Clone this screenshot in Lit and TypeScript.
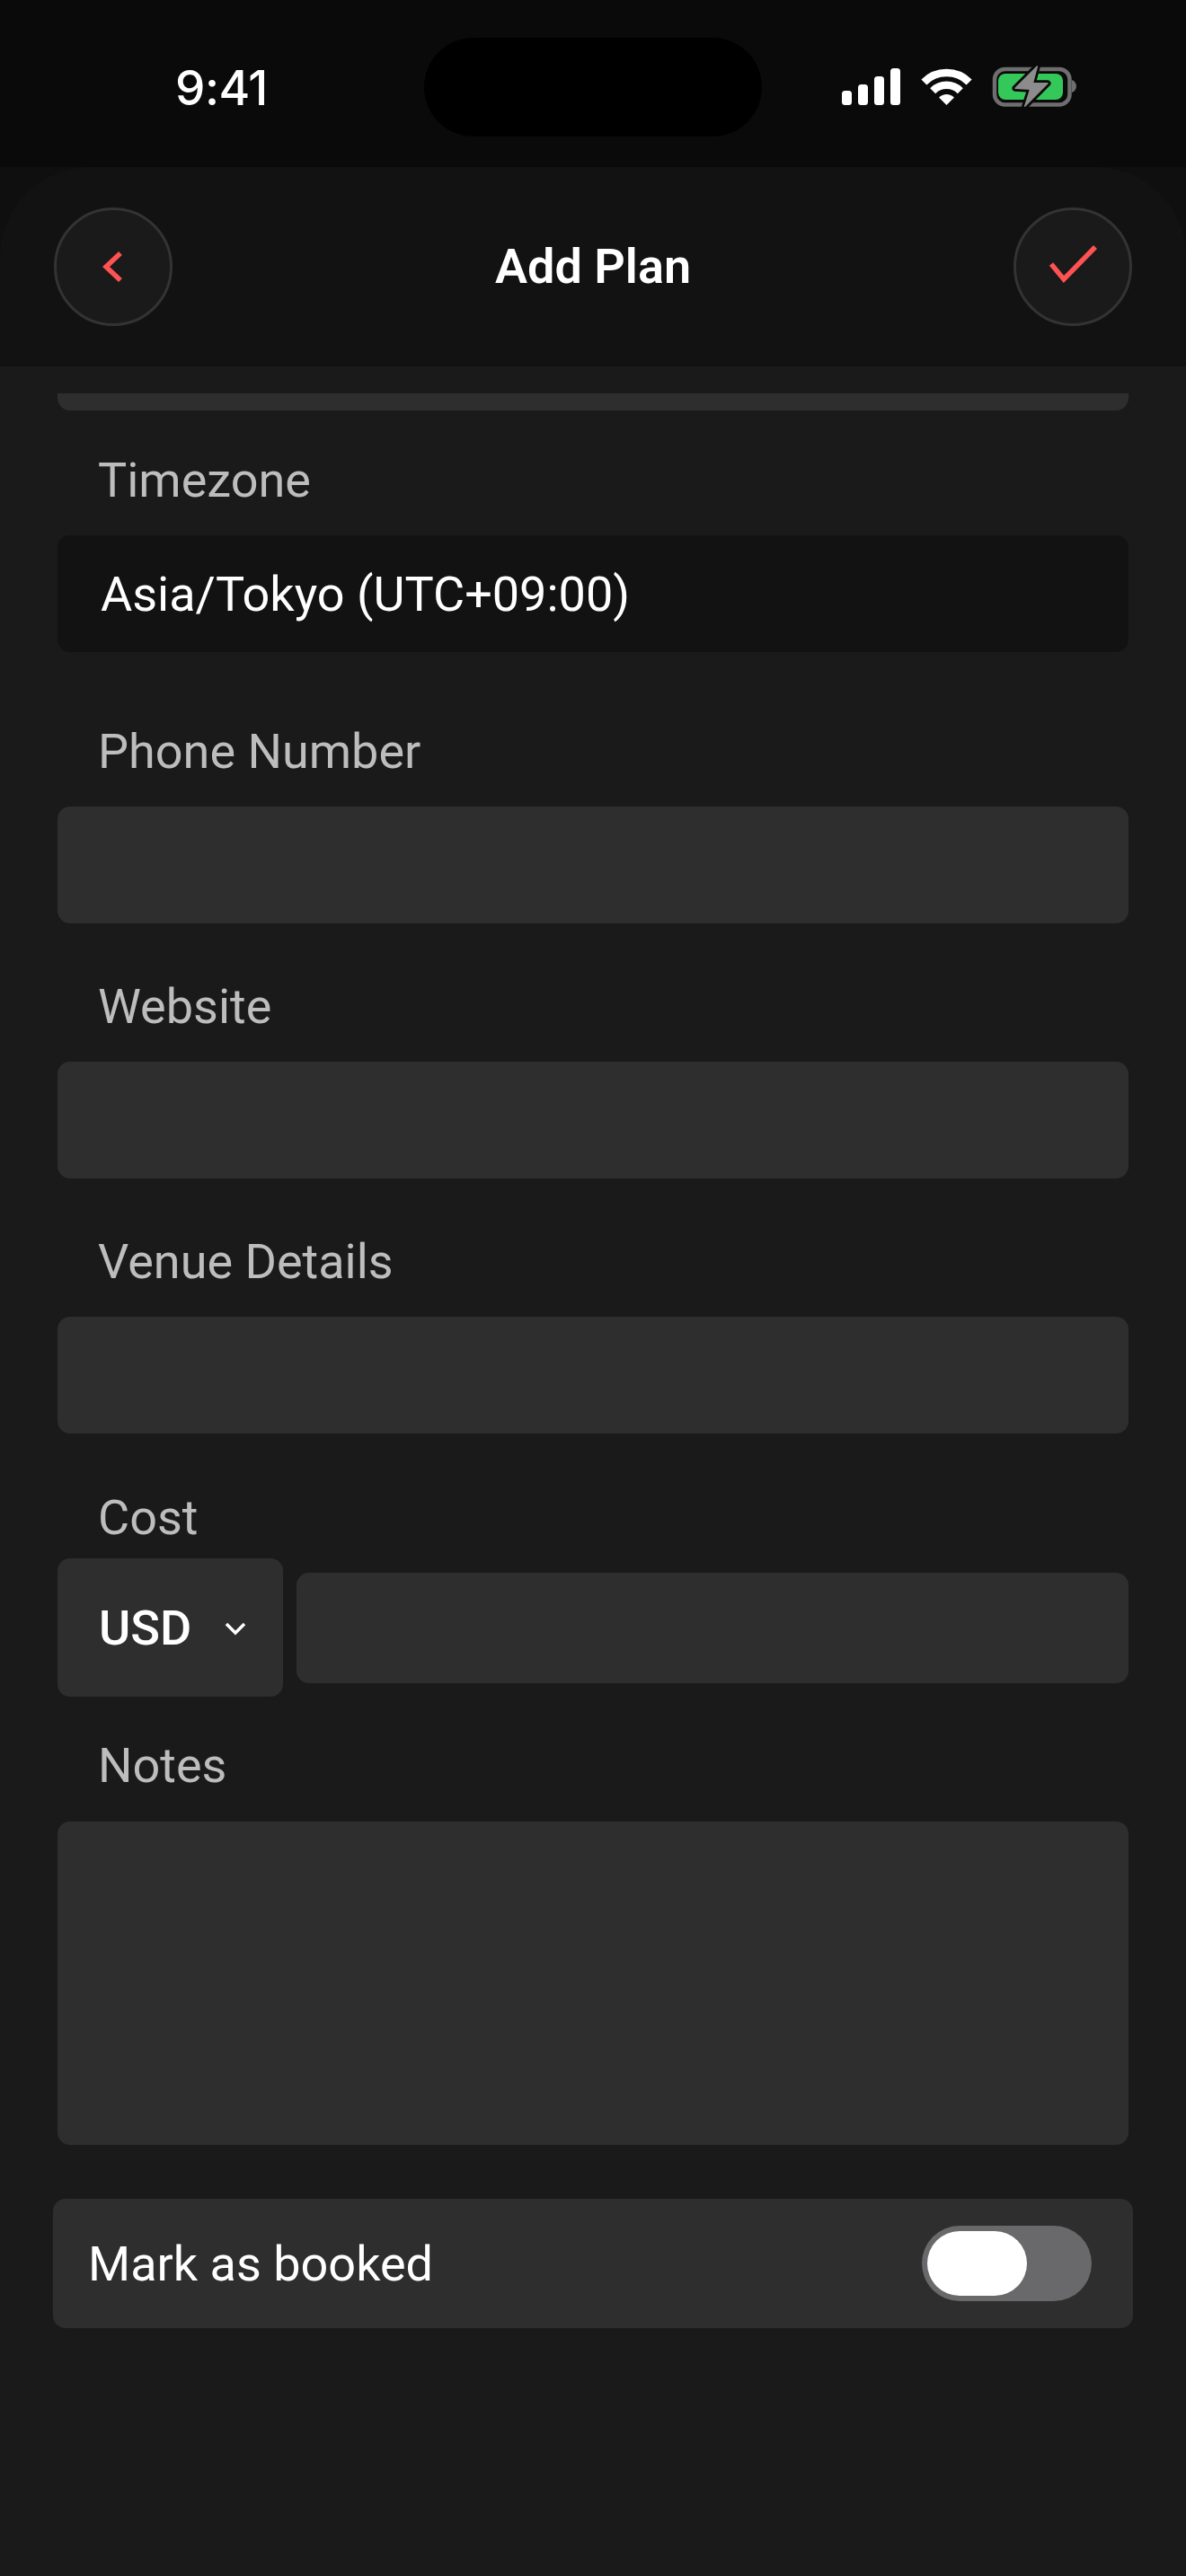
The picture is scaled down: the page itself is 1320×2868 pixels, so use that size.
import { LitElement, html, css } from "lit";
import { customElement } from "lit/decorators.js";

@customElement("app-root")
export class AppRoot extends LitElement {
  static styles = css`
    :host {
      display: block;
      width: 1320px;
      height: 2868px;
      background: #1a1a1a;
      font-family: Roboto, "Liberation Sans", sans-serif;
      color: #fff;
      overflow: hidden;
    }
    * { box-sizing: border-box; }
    .status {
      position: relative;
      height: 186px;
      background: #0a0a0a;
    }
    .time {
      position: absolute;
      left: 195px;
      top: 67px;
      font-family: Inter, Roboto, sans-serif;
      font-size: 53px;
      line-height: 62px;
      font-weight: 500;
      letter-spacing: -0.5px;
    }
    .island {
      position: absolute;
      left: 472px;
      top: 42px;
      width: 376px;
      height: 110px;
      border-radius: 55px;
      background: #000;
    }
    .icons { position: absolute; left: 0; top: 0; }
    .header {
      height: 222px;
      background: #0f0f0f;
    }
    .header-inner {
      height: 100%;
      background: #121212;
      border-radius: 100px 100px 0 0;
      display: flex;
      align-items: center;
      justify-content: space-between;
      padding: 0 60px;
      position: relative;
    }
    .circle {
      width: 132px;
      height: 132px;
      border-radius: 50%;
      background: #1a1a1a;
      border: 3px solid #333;
      display: flex;
      align-items: center;
      justify-content: center;
      padding: 0;
    }
    .title {
      font-size: 54px;
      line-height: 64px;
      font-weight: 600;
    }
    .form {
      display: flex;
      flex-direction: column;
      padding: 30px 64px 0;
    }
    .sliver {
      height: 19px;
      background: #2e2e2e;
      border-radius: 0 0 14px 14px;
      margin-bottom: 46px;
    }
    .field { display: flex; flex-direction: column; margin-bottom: 61px; }
    .field.readonly { margin-bottom: 79px; }
    .field.venue { margin-bottom: 62px; }
    .label {
      font-size: 54px;
      line-height: 63px;
      color: #bdbdbd;
      padding-left: 45px;
      margin-bottom: 30px;
    }
    .input {
      display: block;
      width: 100%;
      height: 130px;
      border: 0;
      outline: 0;
      border-radius: 14px;
      background: #2e2e2e;
      color: #fff;
      font: inherit;
      font-size: 54px;
      padding: 0 48px;
      margin: 0;
    }
    .input.dark { background: #121212; }
    .cost { margin-bottom: 45px; }
    .cost .label { margin-bottom: 14px; }
    .cost-row { display: flex; align-items: center; gap: 15px; }
    .select {
      width: 251px;
      height: 154px;
      border-radius: 14px;
      background: #2e2e2e;
      display: flex;
      align-items: center;
      padding-left: 46px;
      gap: 37px;
      font-size: 54px;
      font-weight: 500;
      flex: none;
    }
    .select svg { margin-top: 2px; flex: none; }
    .cost-row .input { flex: 1; width: auto; height: 123px; min-width: 0; }
    .notes { margin-bottom: 60px; }
    .notes .label { margin-bottom: 31px; }
    .textarea { height: 360px; resize: none; }
    .booked {
      margin: 0 -5px;
      height: 144px;
      border-radius: 14px;
      background: #2e2e2e;
      display: flex;
      align-items: center;
      justify-content: space-between;
      padding: 0 46px 0 39px;
      font-size: 54px;
    }
    .switch {
      width: 189px;
      height: 84px;
      border-radius: 42px;
      background: #69696b;
      padding: 6px;
    }
    .thumb {
      width: 111px;
      height: 72px;
      border-radius: 36px;
      background: #fff;
    }
    svg { display: block; }
  `;

  private field(label: string, cls = "", value = "", dark = false) {
    return html`<div class="field ${cls}">
      <label class="label">${label}</label>
      <input class="input ${dark ? "dark" : ""}" .value=${value} />
    </div>`;
  }

  render() {
    return html`
      <div class="status">
        <div class="time">9:41</div>
        <div class="island"></div>
        <svg class="icons" width="1320" height="186" viewBox="0 0 1320 186">
          <g fill="#fff">
            <rect x="937" y="101" width="11" height="16" rx="3.5" />
            <rect x="955" y="94" width="11" height="23" rx="3.5" />
            <rect x="973" y="85" width="11" height="32" rx="3.5" />
            <rect x="991" y="76" width="11" height="41" rx="3.5" />
          </g>
          <g fill="none" stroke="#fff" stroke-width="8.5">
            <path d="M1028.4 91.4 A35.5 35.5 0 0 1 1078.6 91.4" />
            <path d="M1038.2 101.2 A21.6 21.6 0 0 1 1068.8 101.2" />
          </g>
          <path d="M1053.5 117 L1045 108.5 A12 12 0 0 1 1062 108.5 Z" fill="#fff" />
          <rect x="1107" y="77" width="83.5" height="39.5" rx="11.5" fill="none" stroke="#6e6e6e" stroke-width="4.5" />
          <path d="M1193 89 C1196 90 1198 93 1198 96 C1198 99 1196 102 1193 103 Z" fill="#6e6e6e" />
          <rect x="1111" y="82" width="72" height="29" rx="8" fill="#34c759" />
          <path d="M1154.3 74 L1130 98.3 L1146.7 99.3 L1140.7 118.3 L1166 92.7 L1149.3 92.7 Z"
            fill="#8c8c8c" stroke="#0a0a0a" stroke-width="7" stroke-linejoin="round" paint-order="stroke" />
          <path d="M1154.3 74 L1130 98.3 L1146.7 99.3 L1140.7 118.3 L1166 92.7 L1149.3 92.7 Z"
            fill="#8c8c8c" stroke="#8c8c8c" stroke-width="1.5" stroke-linejoin="round" />
        </svg>
      </div>

      <div class="header">
        <div class="header-inner">
          <button class="circle" aria-label="Back">
            <svg width="40" height="44" viewBox="0 0 40 44">
              <path d="M28 7 L12 22 L28 37" fill="none" stroke="#ff5252" stroke-width="5.5" />
            </svg>
          </button>
          <div class="title">Add Plan</div>
          <button class="circle" aria-label="Save">
            <svg width="64" height="56" viewBox="0 0 64 56">
              <path d="M8 25 L22 42 L57 6" fill="none" stroke="#ff5252" stroke-width="5.5" />
            </svg>
          </button>
        </div>
      </div>

      <div class="form">
        <div class="sliver"></div>
        ${this.field("Timezone", "readonly", "Asia/Tokyo (UTC+09:00)", true)}
        ${this.field("Phone Number")}
        ${this.field("Website")}
        ${this.field("Venue Details", "venue")}
        <div class="field cost">
          <label class="label">Cost</label>
          <div class="cost-row">
            <div class="select">
              <span>USD</span>
              <svg width="24" height="16" viewBox="0 0 24 16">
                <path d="M2 3 L12 13 L22 3" fill="none" stroke="#fff" stroke-width="3.5" />
              </svg>
            </div>
            <input class="input" />
          </div>
        </div>
        <div class="field notes">
          <label class="label">Notes</label>
          <textarea class="input textarea"></textarea>
        </div>
        <div class="booked">
          <span>Mark as booked</span>
          <div class="switch"><div class="thumb"></div></div>
        </div>
      </div>
    `;
  }
}
